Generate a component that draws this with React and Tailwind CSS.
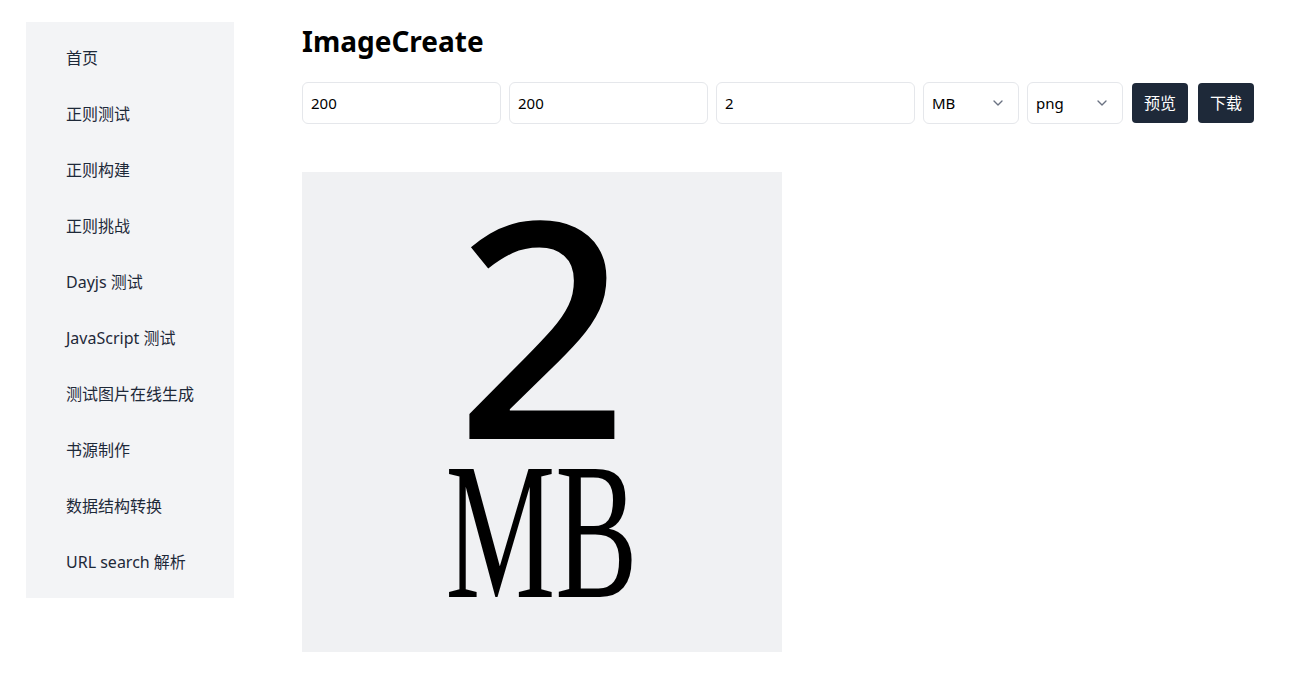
import { ChevronDown } from 'lucide-react';

const links = [
  '首页',
  '正则测试',
  '正则构建',
  '正则挑战',
  'Dayjs 测试',
  'JavaScript 测试',
  '测试图片在线生成',
  '书源制作',
  '数据结构转换',
  'URL search 解析',
];

const font = { fontFamily: '"Noto Sans", "Noto Sans CJK SC", sans-serif' };

function Select({ value, options }) {
  return (
    <div className="relative w-[96px]">
      <select
        defaultValue={value}
        className="w-full h-[42px] appearance-none rounded-md border border-gray-200 bg-white pl-2 pr-8 text-[15px] text-black outline-none"
      >
        {options.map((o) => (
          <option key={o}>{o}</option>
        ))}
      </select>
      <ChevronDown className="pointer-events-none absolute right-[13px] top-[13px] w-4 h-4 text-gray-500" />
    </div>
  );
}

export default function App() {
  return (
    <div className="flex items-start gap-[68px] pl-[26px] pt-[22px] bg-white min-h-[689px]" style={font}>
      <nav className="w-[208px] bg-gray-100 py-2">
        {links.map((l) => (
          <a key={l} href="#" className="flex items-center h-14 pl-10 text-base text-gray-800">
            {l}
          </a>
        ))}
      </nav>

      <main className="flex-1 pr-[56px]">
        <h1 className="text-[28px] font-bold text-black leading-[40px] -mt-[1px]">ImageCreate</h1>

        <div className="flex items-center gap-2 mt-[21px]">
          <input defaultValue="200" className="w-[199px] h-[42px] rounded-md border border-gray-200 px-2 text-[15px] text-black outline-none" />
          <input defaultValue="200" className="w-[199px] h-[42px] rounded-md border border-gray-200 px-2 text-[15px] text-black outline-none" />
          <input defaultValue="2" className="w-[199px] h-[42px] rounded-md border border-gray-200 px-2 text-[15px] text-black outline-none" />
          <Select value="MB" options={['KB', 'MB']} />
          <Select value="png" options={['png', 'jpg', 'webp']} />
          <button className="ml-[1px] h-10 px-3 rounded bg-gray-800 text-base text-white">预览</button>
          <button className="ml-[2px] h-10 px-3 rounded bg-gray-800 text-base text-white">下载</button>
        </div>

        {/* generated preview */}
        <div className="mt-[48px] w-[480px] h-[480px] bg-[#f0f1f3] flex flex-col items-center pt-[32px]">
          <div className="text-[302px] leading-[236px] font-medium text-black" style={{ fontFamily: '"Noto Sans", sans-serif' }}>
            2
          </div>
          <div
            className="text-[196px] leading-[140px] mt-[21px] text-black scale-x-[0.63]"
            style={{ fontFamily: '"Liberation Serif", serif' }}
          >
            MB
          </div>
        </div>
      </main>
    </div>
  );
}
